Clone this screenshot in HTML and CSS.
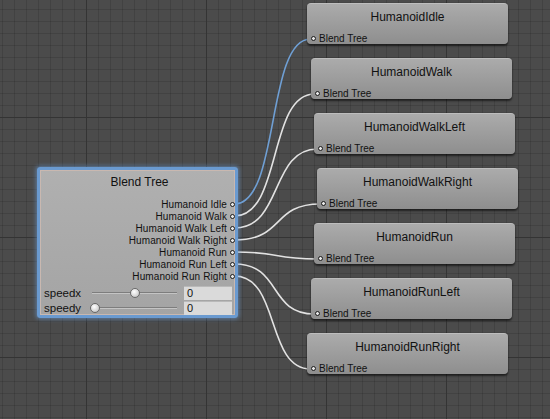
FILE: index.html
```html
<!DOCTYPE html>
<html>
<head>
<meta charset="utf-8">
<link rel="stylesheet" href="styles.css">
</head>
<body>
<div class="canvas">
  <svg class="wires" width="550" height="419" viewBox="0 0 550 419">
    <path class="wire sel" d="M234.5 204 C280 204 266 39 310.5 39"/>
    <path class="wire" d="M234.5 216 C282 216 268 94 314.5 94"/>
    <path class="wire" d="M234.5 228 C283 228 270 149 317.5 149"/>
    <path class="wire" d="M234.5 240 C285 240 271 204 320.5 204"/>
    <path class="wire" d="M234.5 252 C283 252 270 259 317.5 259"/>
    <path class="wire" d="M234.5 264 C282 264 268 314 314.5 314"/>
    <path class="wire" d="M234.5 276 C280 276 266 369 310.5 369"/>
  </svg>

  <div class="blend">
    <div class="blend-title">Blend Tree</div>
    <ul class="outs">
      <li class="out">Humanoid Idle<span class="port"></span></li>
      <li class="out">Humanoid Walk<span class="port"></span></li>
      <li class="out">Humanoid Walk Left<span class="port"></span></li>
      <li class="out">Humanoid Walk Right<span class="port"></span></li>
      <li class="out">Humanoid Run<span class="port"></span></li>
      <li class="out">Humanoid Run Left<span class="port"></span></li>
      <li class="out">Humanoid Run Right<span class="port"></span></li>
    </ul>
    <div class="param">
      <span class="param-label">speedx</span>
      <div class="slider"><span class="track"></span><span class="thumb thumb-x"></span></div>
      <div class="field">0</div>
    </div>
    <div class="param">
      <span class="param-label">speedy</span>
      <div class="slider"><span class="track"></span><span class="thumb thumb-y"></span></div>
      <div class="field">0</div>
    </div>
  </div>

  <div class="node n1"><div class="node-title">HumanoidIdle</div><div class="in"><span class="port"></span>Blend Tree</div></div>
  <div class="node n2"><div class="node-title">HumanoidWalk</div><div class="in"><span class="port"></span>Blend Tree</div></div>
  <div class="node n3"><div class="node-title">HumanoidWalkLeft</div><div class="in"><span class="port"></span>Blend Tree</div></div>
  <div class="node n4"><div class="node-title">HumanoidWalkRight</div><div class="in"><span class="port"></span>Blend Tree</div></div>
  <div class="node n5"><div class="node-title">HumanoidRun</div><div class="in"><span class="port"></span>Blend Tree</div></div>
  <div class="node n6"><div class="node-title">HumanoidRunLeft</div><div class="in"><span class="port"></span>Blend Tree</div></div>
  <div class="node n7"><div class="node-title">HumanoidRunRight</div><div class="in"><span class="port"></span>Blend Tree</div></div>
</div>
</body>
</html>
```

FILE: styles.css
```css
* { box-sizing: border-box; }
html, body { margin: 0; padding: 0; }
body {
  font-family: "Liberation Sans", Arial, sans-serif;
  color: #111;
  background: #4b4b4b;
}
.canvas {
  position: relative;
  width: 550px;
  height: 419px;
  overflow: hidden;
  background-color: #4b4b4b;
  background-image:
    linear-gradient(to right, #343434 1px, transparent 1px),
    linear-gradient(to bottom, #343434 1px, transparent 1px),
    linear-gradient(to right, rgba(0,0,0,0.12) 1px, transparent 1px),
    linear-gradient(to bottom, rgba(0,0,0,0.12) 1px, transparent 1px);
  background-size: 120px 120px, 120px 120px, 12px 12px, 12px 12px;
  background-position: 86px 0, 0 117px, 2px 0, 0 9px;
}
.wires {
  position: absolute;
  left: 0;
  top: 0;
}
.wire {
  fill: none;
  stroke: #e2e2e2;
  stroke-width: 1.6;
}
.wire.sel { stroke: #6f9fd4; }

.port {
  display: inline-block;
  width: 5px;
  height: 5px;
  border-radius: 50%;
  border: 1px solid #1a1a1a;
  background: #e8e8e8;
  flex: none;
}

/* Blend tree node */
.blend {
  position: absolute;
  left: 37px;
  top: 167px;
  width: 201px;
  height: 151px;
  border: 3px solid #6a9ad0;
  border-radius: 3px;
  box-shadow: 0 0 4px 1px rgba(110,160,220,0.6), inset 0 0 0 1px #c9b8b0;
  background: linear-gradient(to bottom, #b0b0b0, #a4a4a4);
  display: flex;
  flex-direction: column;
  padding: 0 0 0 4px;
}
.blend-title {
  height: 24px;
  line-height: 24px;
  text-align: center;
  font-size: 12px;
}
.outs {
  list-style: none;
  margin: 4px 0 3px;
  padding: 0;
  display: flex;
  flex-direction: column;
}
.out {
  height: 12px;
  display: flex;
  align-items: center;
  justify-content: flex-end;
  gap: 3px;
  font-size: 10px;
  letter-spacing: 0.1px;
}
.param {
  height: 16px;
  display: flex;
  align-items: center;
}
.param-label {
  width: 48px;
  font-size: 11.5px;
}
.slider {
  position: relative;
  width: 85px;
  height: 10px;
  display: flex;
  align-items: center;
}
.track {
  display: block;
  width: 100%;
  height: 2px;
  background: #7d7d7d;
  border-bottom: 1px solid #c4c4c4;
}
.thumb {
  position: absolute;
  top: 0;
  width: 10px;
  height: 10px;
  border-radius: 50%;
  border: 1px solid #6a6a6a;
  background: radial-gradient(circle at 40% 35%, #ffffff, #d6d6d6 60%, #aaaaaa);
}
.thumb-x { left: 38px; }
.thumb-y { left: -2px; }
.field {
  margin-left: 7px;
  width: 48px;
  height: 14px;
  background: #dadada;
  border-top: 1px solid #b9b9b9;
  font-size: 11px;
  line-height: 13px;
  padding-left: 3px;
}

/* State nodes */
.node {
  position: absolute;
  width: 201px;
  height: 41px;
  border-radius: 4px;
  background: linear-gradient(to bottom, #ababab, #8e8e8e);
  border-top: 1px solid #bdbdbd;
  box-shadow: 0 2px 2px rgba(0,0,0,0.55), 0 0 1px rgba(0,0,0,0.6);
  display: flex;
  flex-direction: column;
}
.node-title {
  height: 26px;
  line-height: 26px;
  text-align: center;
  font-size: 12px;
}
.in {
  display: flex;
  align-items: center;
  gap: 3px;
  margin-top: 3px;
  padding-left: 4px;
  height: 12px;
  font-size: 10px;
}
.n1 { left: 307px; top: 3px; }
.n2 { left: 311px; top: 58px; }
.n3 { left: 314px; top: 113px; }
.n4 { left: 317px; top: 168px; }
.n5 { left: 314px; top: 223px; }
.n6 { left: 311px; top: 278px; }
.n7 { left: 307px; top: 333px; }
```
